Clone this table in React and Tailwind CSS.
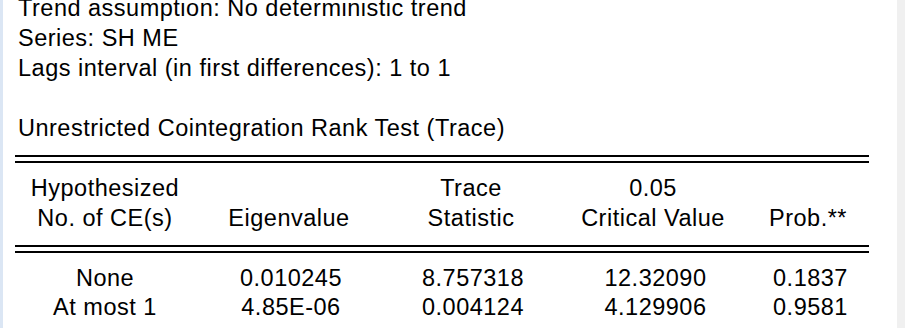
import React from "react";

const rows = [
    ["None", "0.010245", "8.757318", "12.32090", "0.1837"],
    ["At most 1", "4.85E-06", "0.004124", "4.129906", "0.9581"],
];

function DoubleRule() {
    return (
        <div className="flex flex-col gap-[4px] w-[854px]">
            <div className="h-[2px] bg-black" />
            <div className="h-[2px] bg-black" />
        </div>
    );
}

export default function App() {
    return (
        <div className="w-[905px] h-[328px] overflow-hidden flex bg-white text-black font-['Liberation_Sans',Arial,sans-serif] text-[23.5px] leading-[30px] tracking-[0.5px]">
            {/* left frame edge */}
            <div className="w-[3px] bg-[#dbe6f4]" />

            <div className="flex-1 pl-[15px] -mt-[7px]">
                <div>Trend assumption: No deterministic trend</div>
                <div>Series: SH ME</div>
                <div>Lags interval (in first differences): 1 to 1</div>
                <div>&nbsp;</div>
                <div>Unrestricted Cointegration Rank Test (Trace)</div>

                <div className="-ml-[3px] mt-[12px]">
                    <DoubleRule />

                    <div className="grid grid-cols-[180px_188px_176px_188px_122px] pt-[10px] pb-[12px] text-center">
                        <div>Hypothesized</div>
                        <div />
                        <div>Trace</div>
                        <div>0.05</div>
                        <div />
                        <div>No. of CE(s)</div>
                        <div>Eigenvalue</div>
                        <div>Statistic</div>
                        <div>Critical Value</div>
                        <div>Prob.**</div>
                    </div>

                    <DoubleRule />

                    <div className="pt-[11px] leading-[29px]">
                        {rows.map((r) => (
                            <div key={r[0]} className="grid grid-cols-[180px_188px_176px_188px_122px] text-center">
                                <div>{r[0]}</div>
                                <div className="pl-[4px]">{r[1]}</div>
                                <div className="pl-[4px]">{r[2]}</div>
                                <div className="pl-[5px]">{r[3]}</div>
                                <div className="pl-[5px]">{r[4]}</div>
                            </div>
                        ))}
                    </div>
                </div>
            </div>

            {/* right scrollbar edge */}
            <div className="w-[8px] bg-[#f0f0f0]" />
        </div>
    );
}
